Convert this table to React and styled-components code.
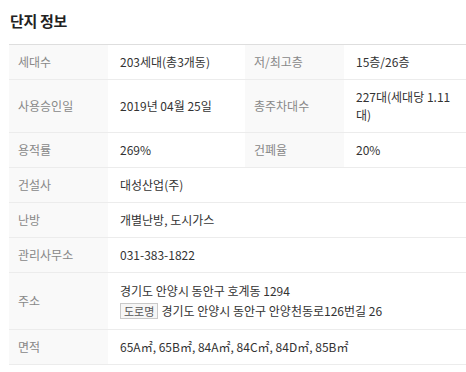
import React from "react";
import styled, { createGlobalStyle } from "styled-components";

const Global = createGlobalStyle`
  html, body { margin: 0; padding: 0; background: #fff; }
  body { font-family: "Noto Sans CJK KR", "Noto Sans", sans-serif; }
`;

const Wrap = styled.section`
  padding: 0 0 0 9px;
  width: 466px;
  box-sizing: border-box;
`;

const Title = styled.h2`
  margin: 0;
  padding: 11px 0 0 1px;
  height: 44px;
  box-sizing: border-box;
  font-size: 15px;
  line-height: 20px;
  font-weight: 700;
  color: #222;
  letter-spacing: -0.3px;
`;

const Table = styled.div`
  border-top: 1px solid #dedede;
`;

const Row = styled.div`
  display: grid;
  grid-template-columns: 99px 137px 99px 1fr;
  border-bottom: 1px solid #ececec;
  font-size: 12px;
  line-height: 18px;
`;

const Label = styled.div`
  background: #f9f9f9;
  color: #888;
  padding: 8px 8px 8px 9px;
  display: flex;
  align-items: center;
`;

const Value = styled.div`
  color: #333;
  padding: 8px 12px 8px 12px;
  display: flex;
  flex-direction: column;
  justify-content: center;
  grid-column: ${(p) => (p.$wide ? "2 / 5" : "auto")};
  word-break: keep-all;
`;

const AddrLine = styled.div`
  display: flex;
  align-items: center;
  gap: 3px;
  line-height: 20px;
`;

const Badge = styled.span`
  display: inline-block;
  border: 1px solid #c9c9c9;
  background: #f6f6f6;
  color: #555;
  font-size: 11px;
  line-height: 14px;
  padding: 0 3px;
`;

const Sup = styled.span`
  font-size: 12px;
`;

const m2 = "㎡";

export default function App() {
  return (
    <>
      <Global />
      <Wrap>
        <Title>단지 정보</Title>
        <Table>
          <Row>
            <Label>세대수</Label>
            <Value>203세대(총3개동)</Value>
            <Label>저/최고층</Label>
            <Value>15층/26층</Value>
          </Row>
          <Row>
            <Label>사용승인일</Label>
            <Value>2019년 04월 25일</Value>
            <Label>총주차대수</Label>
            <Value>227대(세대당 1.11 대)</Value>
          </Row>
          <Row>
            <Label>용적률</Label>
            <Value>269%</Value>
            <Label>건폐율</Label>
            <Value>20%</Value>
          </Row>
          <Row>
            <Label>건설사</Label>
            <Value $wide>대성산업(주)</Value>
          </Row>
          <Row>
            <Label>난방</Label>
            <Value $wide>개별난방, 도시가스</Value>
          </Row>
          <Row>
            <Label>관리사무소</Label>
            <Value $wide>031-383-1822</Value>
          </Row>
          <Row>
            <Label>주소</Label>
            <Value $wide>
              <AddrLine>경기도 안양시 동안구 호계동 1294</AddrLine>
              <AddrLine>
                <Badge>도로명</Badge>
                <span>경기도 안양시 동안구 안양천동로126번길 26</span>
              </AddrLine>
            </Value>
          </Row>
          <Row>
            <Label>면적</Label>
            <Value $wide>
              <Sup>
                65A{m2}, 65B{m2}, 84A{m2}, 84C{m2}, 84D{m2}, 85B{m2}
              </Sup>
            </Value>
          </Row>
        </Table>
      </Wrap>
    </>
  );
}
